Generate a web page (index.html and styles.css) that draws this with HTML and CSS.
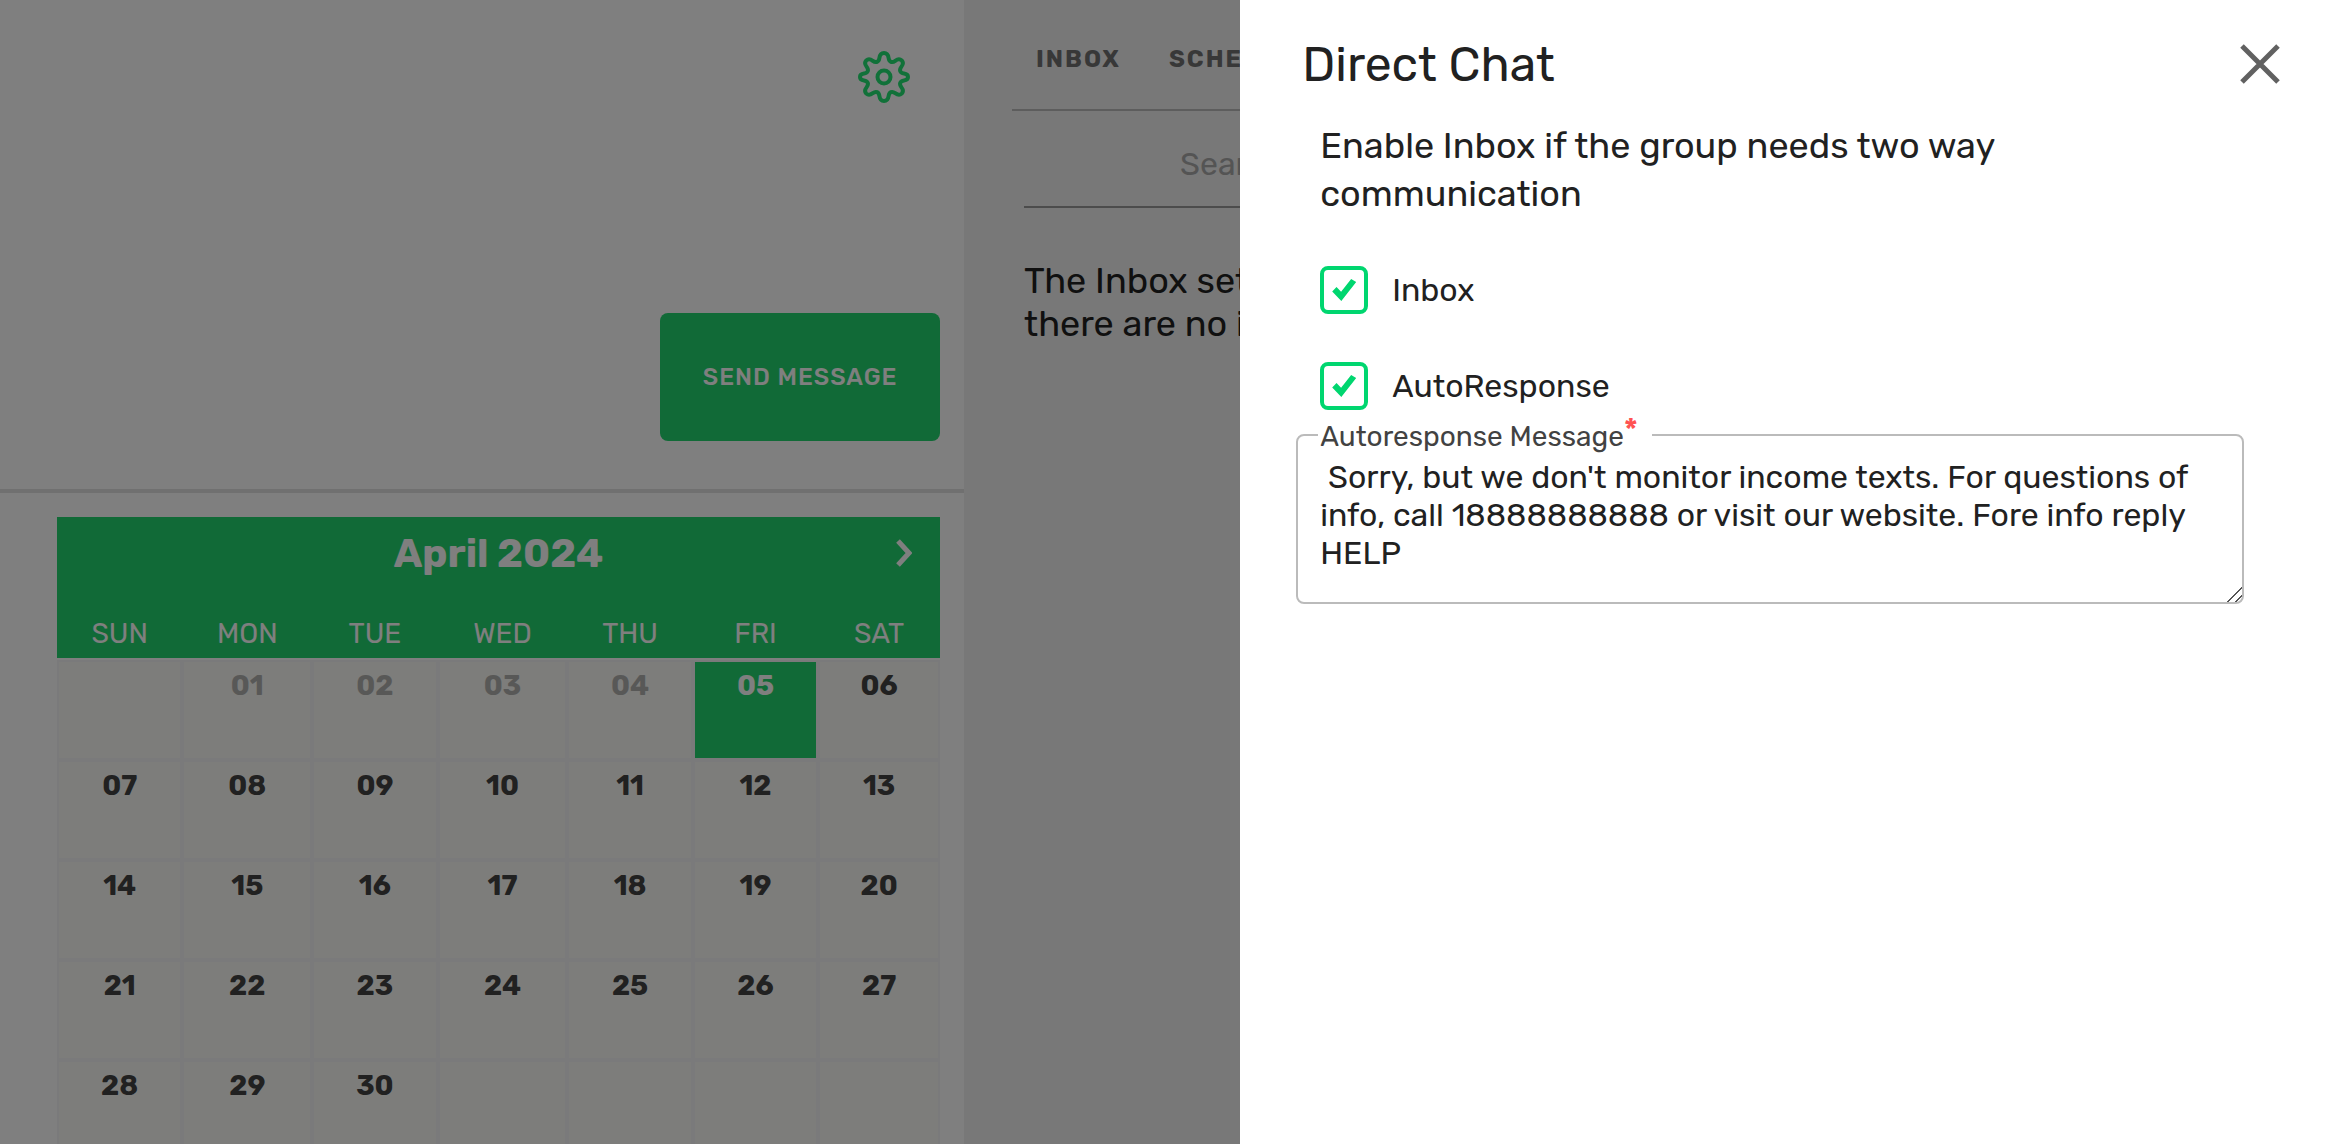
FILE: index.html
```html
<!DOCTYPE html>
<html lang="en">
<head>
    <meta charset="UTF-8">
    <title>Direct Chat</title>
    <link rel="stylesheet" href="styles.css">
</head>
<body>

    <div class="page">
        <main class="compose">
            <section class="message">
                <button class="settings" aria-label="Settings">
                    <svg viewBox="0 0 52 52" fill="none" stroke="currentColor" stroke-width="4" stroke-linejoin="round">
                        <path d="M26 2c3 0 4.200 2 4.600 5c.6 4 3.400 5.200 6.600 2.800c2.600-2 4.600-2.200 6.500-.4c1.800 1.900 1.600 3.900-.4 6.500c-2.400 3.200-1.200 6 2.700 6.600c3 .4 4 1.500 4 3.500s-1 3.100-4 3.500c-3.900.6-5.100 3.400-2.700 6.600c2 2.600 2.200 4.600.4 6.500c-1.900 1.800-3.900 1.600-6.500-.4c-3.200-2.400-6-1.200-6.600 2.800c-.4 3-1.600 5-4.600 5s-4.200-2-4.600-5c-.6-4-3.400-5.200-6.600-2.800c-2.600 2-4.600 2.200-6.500.4c-1.800-1.900-1.600-3.900.4-6.500c2.400-3.200 1.200-6-2.700-6.600c-3-.4-4-1.500-4-3.500s1-3.100 4-3.500c3.900-.6 5.100-3.400 2.700-6.600c-2-2.600-2.200-4.600-.4-6.500c1.900-1.800 3.900-1.600 6.500.4c3.200 2.400 6 1.200 6.600-2.800c.4-3 1.600-5 4.600-5z"/>
                        <circle cx="26" cy="26" r="6.500"/>
                    </svg>
                </button>
                <button class="send">SEND MESSAGE</button>
            </section>

            <section class="calendar">
                <div class="calendar-title">
                    <h2>April 2024</h2>
                    <button class="next" aria-label="Next month">
                        <svg viewBox="0 0 16 28" fill="none" stroke="currentColor" stroke-width="5">
                            <path d="M2 2l11 12L2 26"/>
                        </svg>
                    </button>
                </div>
                <table>
                    <thead>
                        <tr><th>SUN</th><th>MON</th><th>TUE</th><th>WED</th><th>THU</th><th>FRI</th><th>SAT</th></tr>
                    </thead>
                    <tbody>
                        <tr><td></td><td class="past">01</td><td class="past">02</td><td class="past">03</td><td class="past">04</td><td class="today">05</td><td>06</td></tr>
                        <tr><td>07</td><td>08</td><td>09</td><td>10</td><td>11</td><td>12</td><td>13</td></tr>
                        <tr><td>14</td><td>15</td><td>16</td><td>17</td><td>18</td><td>19</td><td>20</td></tr>
                        <tr><td>21</td><td>22</td><td>23</td><td>24</td><td>25</td><td>26</td><td>27</td></tr>
                        <tr><td>28</td><td>29</td><td>30</td><td></td><td></td><td></td><td></td></tr>
                    </tbody>
                </table>
            </section>
        </main>

        <aside class="inbox">
            <nav class="tabs">
                <a href="#inbox">INBOX</a>
                <a href="#scheduled">SCHED</a>
            </nav>
            <input class="search" type="text" placeholder="Search" aria-label="Search">
            <p>The Inbox set<br>there are no i</p>
        </aside>
    </div>

    <div class="overlay">
        <div class="drawer" role="dialog" aria-labelledby="drawer-title">
            <header class="drawer-header">
                <h1 id="drawer-title">Direct Chat</h1>
                <button class="close" aria-label="Close">
                    <svg viewBox="0 0 40 40" stroke="currentColor" stroke-width="5">
                        <path d="M2 2l36 36M38 2L2 38"/>
                    </svg>
                </button>
            </header>
            <form>
                <p class="intro">Enable Inbox if the group needs two way communication</p>
                <div class="check">
                    <input type="checkbox" id="inbox" checked>
                    <label for="inbox">Inbox</label>
                </div>
                <div class="check">
                    <input type="checkbox" id="autoresponse" checked>
                    <label for="autoresponse">AutoResponse</label>
                </div>
                <div class="field">
                    <label for="message">Autoresponse Message<sup class="required">*</sup></label>
                    <textarea id="message"> Sorry, but we don't monitor income texts. For questions of info, call 18888888888 or visit our website. Fore info reply HELP</textarea>
                </div>
            </form>
        </div>
    </div>

</body>
</html>
```
FILE: styles.css
```css
* {
    box-sizing: border-box;
}
body {
    margin: 0;
    font-family: Rubik, Roboto, sans-serif;
    color: #212121;
    background-color: white;
    height: 100vh;
    overflow: hidden;
}
h1, h2, p {
    margin: 0;
}
button {
    padding: 0;
    border: none;
    background: none;
    font-family: inherit;
    cursor: pointer;
}
svg {
    display: block;
    width: 100%;
}
.page {
    display: grid;
    grid-template-columns: 41.2% 11.8%;
    min-height: 100vh;
}

/* left side */
.message {
    display: flex;
    flex-direction: column;
    align-items: flex-end;
    justify-content: space-between;
    height: 493px;
    padding: 51px 24px 48px;
    border-bottom: 4px solid #e0e0e0;
}
.settings {
    width: 52px;
    margin-right: 30px;
    color: #22e272;
}
.send {
    width: 280px;
    height: 128px;
    border-radius: 8px;
    background-color: #22d46e;
    color: white;
    font-size: 24px;
    font-weight: 500;
    letter-spacing: 1px;
}
.calendar {
    padding: 24px 24px 0 57px;
}
.calendar-title {
    display: flex;
    align-items: center;
    height: 72px;
    padding: 0 28px 0 44px;
    background-color: #22d46e;
    color: white;
}
.calendar-title h2 {
    flex: 1;
    text-align: center;
    font-size: 40px;
}
.next {
    width: 16px;
    color: white;
}
table {
    width: 100%;
    table-layout: fixed;
    border-collapse: separate;
    border-spacing: 0;
}
th {
    width: 14.2%;
    height: 71px;
    padding: 20px 0 0;
    background-color: #22d46e;
    border-bottom: 2px solid white;
    color: white;
    font-size: 28px;
    font-weight: 400;
}
th:nth-child(2), th:nth-child(4) {
    width: 14.7%;
}
th:nth-child(7) {
    width: 13.8%;
}
td {
    height: 100px;
    padding: 8px 0;
    border: 2px solid #f4f4f6;
    background-color: #fafaf6;
    font-size: 28px;
    font-weight: 700;
    line-height: 32px;
    text-align: center;
    vertical-align: top;
    color: #424242;
}
td.past {
    color: #b0b0ae;
}
td.today {
    background-color: #22d46e;
    color: white;
}

/* inbox column */
.inbox {
    padding-left: 48px;
    background-color: #f0f0f0;
    overflow: hidden;
    white-space: nowrap;
}
.tabs {
    display: flex;
    gap: 48px;
    height: 111px;
    padding: 44px 24px 0;
    border-bottom: 2px solid #bbb;
}
.tabs a {
    color: #707070;
    font-size: 24px;
    font-weight: 700;
    letter-spacing: 2px;
    line-height: 30px;
    text-decoration: none;
}
.search {
    display: block;
    width: 100%;
    height: 72px;
    margin: 25px 12px 51px;
    padding: 0 0 14px 156px;
    border: none;
    border-bottom: 2px solid #999;
    background: none;
    font-family: inherit;
    font-size: 32px;
}
.search::placeholder {
    color: #a8a8a8;
}
.inbox p {
    padding: 0 12px;
    font-size: 36px;
    line-height: 43px;
}

/* drawer */
.overlay {
    position: fixed;
    inset: 0;
    display: flex;
    justify-content: flex-end;
    background-color: rgba(0, 0, 0, 0.5);
}
.drawer {
    width: 47%;
    padding: 36px 60px 36px 56px;
    background-color: white;
}
.drawer-header {
    display: flex;
    align-items: center;
    justify-content: space-between;
    height: 56px;
    padding-left: 6px;
}
.drawer-header h1 {
    font-size: 48px;
    font-weight: 400;
}
.close {
    width: 40px;
    color: #616161;
}
form {
    padding-right: 36px;
}
.intro {
    padding: 30px 24px 48px;
    font-size: 36px;
    line-height: 48px;
}
.check {
    display: flex;
    align-items: center;
    gap: 24px;
    margin-bottom: 48px;
    padding-left: 24px;
    font-size: 32px;
}
.check input {
    appearance: none;
    display: grid;
    place-items: center;
    width: 48px;
    height: 48px;
    margin: 0;
    border: 4px solid #00d66f;
    border-radius: 8px;
}
.check input:checked::before {
    content: "";
    width: 24px;
    height: 24px;
    background-color: #00d66f;
    clip-path: polygon(0 56%, 18% 38%, 37% 57%, 79% 4%, 100% 17%, 38% 96%);
}
.field {
    position: relative;
    margin-top: -24px;
}
.field label {
    position: absolute;
    top: -14px;
    left: 22px;
    width: 334px;
    padding-left: 2px;
    background-color: white;
    color: #424242;
    font-size: 28px;
    line-height: 34px;
}
.required {
    color: #ff5252;
    font-size: 32px;
    font-weight: 500;
    line-height: 0;
    vertical-align: 5px;
}
textarea {
    display: block;
    width: 100%;
    height: 170px;
    padding: 22px;
    border: 2px solid #bbb;
    border-radius: 8px;
    background-color: white;
    color: #212121;
    font-family: inherit;
    font-size: 32px;
    line-height: 38px;
}
textarea::-webkit-resizer {
    background: linear-gradient(135deg, transparent 48%, #555 48%, #555 55%, transparent 55%, transparent 74%, #555 74%, #555 81%, transparent 81%);
}
```
